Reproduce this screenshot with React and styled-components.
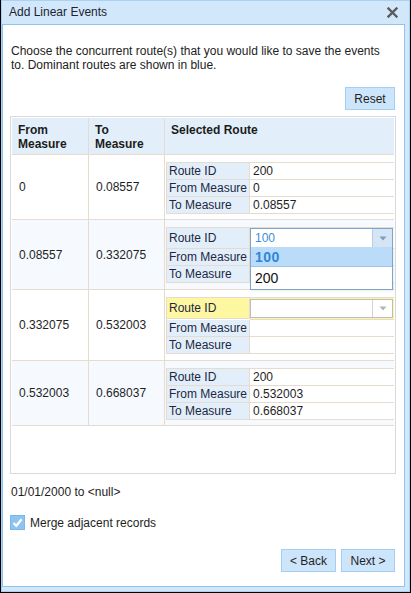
import React from "react"
import styled, { createGlobalStyle } from "styled-components"

const GlobalStyle = createGlobalStyle`
  html, body {
    margin: 0;
    padding: 0;
    background: #fff;
  }
`

const TAN = "#e5dccf"

const rows = [
    {
        from: "0",
        to: "0.08557",
        route: { kind: "text", id: "200", from: "0", to: "0.08557" },
    },
    {
        from: "0.08557",
        to: "0.332075",
        alt: true,
        route: { kind: "open", id: "100", options: ["100", "200"] },
    },
    {
        from: "0.332075",
        to: "0.532003",
        route: { kind: "empty" },
    },
    {
        from: "0.532003",
        to: "0.668037",
        alt: true,
        route: { kind: "text", id: "200", from: "0.532003", to: "0.668037" },
    },
]

const CloseIcon = () => (
    <svg width="11" height="11" viewBox="0 0 11 11">
        <path d="M1.5 1.5 L9.5 9.5 M9.5 1.5 L1.5 9.5" stroke="#5b5b5b" strokeWidth="2.4" strokeLinecap="square" />
    </svg>
)

const Arrow = ({ color }) => (
    <svg width="8" height="5" viewBox="0 0 8 5">
        <path d="M0.5 0.5 L7.5 0.5 L4 4.5 Z" fill={color} />
    </svg>
)

const Check = () => (
    <svg width="13" height="13" viewBox="0 0 13 13">
        <path d="M2.5 7 L5.3 9.8 L10.6 3.2" stroke="#fff" strokeWidth="2.2" fill="none" />
    </svg>
)

const Combo = ({ open, value, options }) => (
    <ComboBox $open={open}>
        <ComboText>{value}</ComboText>
        <ComboButton $open={open}>
            <Arrow color={open ? "#7f9bbb" : "#a9b5c3"} />
        </ComboButton>
        {open && (
            <DropList>
                {options.map(option => (
                    <DropItem key={option} $selected={option === value}>{option}</DropItem>
                ))}
            </DropList>
        )}
    </ComboBox>
)

const RouteDetails = ({ route }) => {
    if (route.kind === "text") {
        return (
            <InnerTable>
                <Label>Route ID</Label>
                <Value>{route.id}</Value>
                <Label>From Measure</Label>
                <Value>{route.from}</Value>
                <Label>To Measure</Label>
                <Value>{route.to}</Value>
            </InnerTable>
        )
    }
    const open = route.kind === "open"
    return (
        <InnerTable>
            <Label $tall $warn={!open}>Route ID</Label>
            <ComboCell $warn={!open}>
                <Combo open={open} value={open ? route.id : ""} options={route.options || []} />
            </ComboCell>
            <Label>From Measure</Label>
            <Value />
            <Label>To Measure</Label>
            <Value />
        </InnerTable>
    )
}

const App = () => {
    return (
        <>
            <GlobalStyle />
            <Window>
                <TitleBar>
                    <Title>Add Linear Events</Title>
                    <CloseIcon />
                </TitleBar>
                <Body>
                    <Intro>
                        Choose the concurrent route(s) that you would like to save the events<br />
                        to. Dominant routes are shown in blue.
                    </Intro>
                    <Toolbar>
                        <Button $width={50}>Reset</Button>
                    </Toolbar>
                    <GridPanel>
                        <GridRow $head>
                            <HeadCell>From<br />Measure</HeadCell>
                            <HeadCell>To<br />Measure</HeadCell>
                            <HeadCell $last>Selected Route</HeadCell>
                        </GridRow>
                        {rows.map(row => (
                            <GridRow key={row.from} $alt={row.alt}>
                                <Cell>{row.from}</Cell>
                                <Cell>{row.to}</Cell>
                                <RouteCell $combo={row.route.kind !== "text"}>
                                    <RouteDetails route={row.route} />
                                </RouteCell>
                            </GridRow>
                        ))}
                    </GridPanel>
                    <DateRange>01/01/2000 to &lt;null&gt;</DateRange>
                    <CheckRow>
                        <CheckBox><Check /></CheckBox>
                        <span>Merge adjacent records</span>
                    </CheckRow>
                    <Footer>
                        <Button $width={55}>&lt; Back</Button>
                        <Button $width={54}>Next &gt;</Button>
                    </Footer>
                </Body>
            </Window>
        </>
    )
}

const Window = styled.div`
    width: 411px;
    height: 593px;
    box-sizing: border-box;
    border: 1px solid #000;
    border-top: none;
    background: #d2e8fa;
    box-shadow: inset 0 0 0 1px #a9d1f3;
    padding: 0 5px 5px 1px;
    display: flex;
    flex-direction: column;
    font-family: "Liberation Sans", Arial, sans-serif;
    font-size: 12px;
    color: #1e1e1e;
`

const TitleBar = styled.div`
    height: 24px;
    flex: none;
    display: flex;
    align-items: center;
    justify-content: space-between;
    padding: 0 7px 0 7px;
    svg { margin-top: 1px; }
`

const Title = styled.div`
    line-height: 24px;
    color: #1d2433;
`

const Body = styled.div`
    flex: 1;
    background: #fff;
    border: 1px solid #8fc4ef;
    padding: 19px 8px 0 7px;
    display: flex;
    flex-direction: column;
`

const Intro = styled.p`
    margin: 0;
    padding-left: 1px;
    line-height: 14px;
    color: #222;
`

const Toolbar = styled.div`
    margin-top: 15px;
    display: flex;
    justify-content: flex-end;
    padding-right: 1px;
`

const Button = styled.div`
    width: ${p => p.$width}px;
    height: 23px;
    box-sizing: border-box;
    display: flex;
    align-items: center;
    justify-content: center;
    background: #cde5fa;
    border: 1px solid #a3cff3;
    color: #1f1f1f;
    font-size: 12px;
`

const GridPanel = styled.div`
    margin-top: 6px;
    height: 358px;
    box-sizing: border-box;
    border: 1px solid #d9d9d9;
    padding: 1px;
    position: relative;
`

const GridRow = styled.div`
    display: grid;
    grid-template-columns: 77px 76px 1fr;
    border-bottom: 1px solid ${TAN};
    background: ${p => (p.$head ? "#e2effb" : p.$alt ? "#f6fafe" : "#fff")};
    position: relative;
    z-index: ${p => (p.$alt ? 2 : 1)};
`

const HeadCell = styled.div`
    height: 36px;
    box-sizing: border-box;
    padding: 5px 0 0 6px;
    border-right: ${p => (p.$last ? "none" : `1px solid ${TAN}`)};
    font-weight: bold;
    line-height: 14px;
    color: #1c1c1c;
`

const Cell = styled.div`
    display: flex;
    align-items: center;
    padding-left: 7px;
    border-right: 1px solid ${TAN};
    color: #1e1e1e;
`

const RouteCell = styled.div`
    padding: 7px 0 ${p => (p.$combo ? 6 : 5)}px 1px;
`

const InnerTable = styled.div`
    display: grid;
    grid-template-columns: 83px 1fr;
    border-top: 1px solid ${TAN};
    border-left: 1px solid ${TAN};
    line-height: 16px;
`

const Label = styled.div`
    height: ${p => (p.$tall ? 20 : 16)}px;
    display: flex;
    align-items: center;
    padding-left: 2px;
    background: ${p => (p.$warn ? "#fdf7a2" : "#e2effb")};
    border-right: 1px solid ${TAN};
    border-bottom: 1px solid ${TAN};
    color: #1f2740;
    white-space: nowrap;
`

const Value = styled.div`
    height: 16px;
    padding-left: 3px;
    border-bottom: 1px solid ${TAN};
    background: #fff;
`

const ComboCell = styled.div`
    height: 20px;
    box-sizing: content-box;
    border-bottom: 1px solid ${TAN};
    background: ${p => (p.$warn ? "#fdf7a2" : "transparent")};
    padding: ${p => (p.$warn ? "1px 1px 0 0" : "0 1px 0 0")};
    display: flex;
`

const ComboBox = styled.div`
    flex: 1;
    height: ${p => (p.$open ? 20 : 19)}px;
    box-sizing: border-box;
    border: 1px solid ${p => (p.$open ? "#7ea6cc" : "#b9bec4")};
    background: #fff;
    display: flex;
    position: relative;
`

const ComboText = styled.div`
    flex: 1;
    padding-left: 4px;
    line-height: 18px;
    color: #3d8ddb;
`

const ComboButton = styled.div`
    width: 19px;
    display: flex;
    align-items: center;
    justify-content: center;
    background: ${p => (p.$open ? "#d4e5f6" : "#fff")};
    border-left: 1px solid ${p => (p.$open ? "#b4cde4" : "#d0d4d8")};
`

const DropList = styled.div`
    position: absolute;
    top: 100%;
    left: -1px;
    right: -1px;
    border: 1px solid #7ea6cc;
    border-top: none;
    background: #fff;
    z-index: 5;
    box-shadow: 1px 1px 2px rgba(0, 0, 0, 0.08);
`

const DropItem = styled.div`
    height: ${p => (p.$selected ? 20 : 22)}px;
    box-sizing: border-box;
    display: flex;
    align-items: center;
    padding-left: 4px;
    font-size: 14px;
    background: ${p => (p.$selected ? "#bbdcf8" : "#fff")};
    border-bottom: ${p => (p.$selected ? "1px solid #9fc6ea" : "none")};
    color: ${p => (p.$selected ? "#2f86da" : "#111")};
    font-weight: ${p => (p.$selected ? "bold" : "normal")};
    letter-spacing: ${p => (p.$selected ? "0.5px" : "0")};
`

const DateRange = styled.div`
    margin-top: 11px;
    padding-left: 1px;
    line-height: 14px;
    color: #1e1e1e;
`

const CheckRow = styled.div`
    margin-top: 16px;
    display: flex;
    align-items: center;
    gap: 5px;
    line-height: 14px;
    color: #1e1e1e;
`

const CheckBox = styled.div`
    width: 15px;
    height: 15px;
    box-sizing: border-box;
    background: #8dc4f0;
    border: 1px solid #7fb6e6;
    display: flex;
    align-items: center;
    justify-content: center;
`

const Footer = styled.div`
    margin-top: 19px;
    display: flex;
    justify-content: flex-end;
    gap: 5px;
    padding-right: 1px;
`

export default App
